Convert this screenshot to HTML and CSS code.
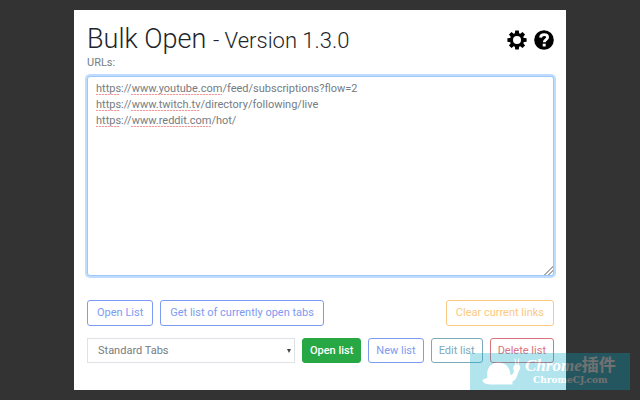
FILE: index.html
```html
<!DOCTYPE html>
<html lang="en">
<head>
  <meta charset="UTF-8" />
  <meta name="viewport" content="width=device-width, initial-scale=1.0"/>
  <title>Bulk Open</title>
  <link rel="stylesheet" href="styles.css">
</head>
<body>
  <main class="popup">
    <header class="header">
      <h1>Bulk Open <small>- Version 1.3.0</small></h1>
      <div class="header-icons">
        <button class="icon-btn" type="button" aria-label="Settings">
          <svg viewBox="0 0 20 20" width="20" height="20">
            <g fill="#000">
              <circle cx="10" cy="10" r="7"/>
              <g id="teeth">
                <path d="M8.2 0.4h3.6l.5 4h-4.600zM8.2 19.6h3.6l.5-4h-4.600z"/>
                <path d="M0.4 8.2v3.6l4 .5v-4.600zM19.6 8.2v3.6l-4 .5v-4.600z"/>
              </g>
              <use href="#teeth" transform="rotate(45 10 10)"/>
            </g>
            <circle cx="10" cy="10" r="4" fill="#fff"/>
          </svg>
        </button>
        <button class="icon-btn" type="button" aria-label="Help">
          <svg viewBox="0 0 20 20" width="20" height="20">
            <circle cx="10" cy="10" r="9.8" fill="#000"/>
            <path d="M6.5 7.600C6.800 5.500 8.200 4.600 10.100 4.600c2 0 3.500 1 3.500 2.700 0 2.400-3.300 2.300-3.300 4.900" fill="none" stroke="#fff" stroke-width="2.8"/>
            <path d="M8.700 13.700h3v2.800h-3z" fill="#fff"/>
          </svg>
        </button>
      </div>
    </header>

    <label class="urls-label" for="urls">URLs:</label>
    <textarea id="urls" class="urls" spellcheck="true">https://www.youtube.com/feed/subscriptions?flow=2
https://www.twitch.tv/directory/following/live
https://www.reddit.com/hot/</textarea>

    <div class="row actions">
      <button class="btn btn-blue" type="button">Open List</button>
      <button class="btn btn-blue" type="button">Get list of currently open tabs</button>
      <button class="btn btn-yellow push-right" type="button">Clear current links</button>
    </div>

    <div class="row lists">
      <div class="select-wrap">
        <select class="list-select" aria-label="Saved list">
          <option>Standard Tabs</option>
        </select>
      </div>
      <button class="btn btn-green" type="button">Open list</button>
      <button class="btn btn-blue" type="button">New list</button>
      <button class="btn btn-teal" type="button">Edit list</button>
      <button class="btn btn-red" type="button">Delete list</button>
    </div>
  </main>

  <div class="watermark">
    <svg class="snail" viewBox="0 0 40 28" width="40" height="28">
      <path fill="#fff" d="M0.5 22.5C1.5 20.5 4 20.5 5.5 20 3.500 11 9 4.500 16.500 4.500c7.500 0 11.500 5.500 12 12.500 2.500-.5 3.500-2 3.300-4.500-1.500-3 .2-6.500 3.200-6.300 3 .2 4.200 3.200 2.500 5.800-1.500 2-1.800 5-3 7.500-.8 1.800-2 3-4 4v3H10.500C5 26.500 1 25.500.5 22.500z"/>
      <path fill="none" stroke="#fff" stroke-width="1" d="M34 7l-1-6.500M36 7l.8-6.500"/>
    </svg>
    <div class="watermark-text">
      <span class="watermark-name"><i>Chrome</i>插件</span>
      <span class="watermark-site">ChromeCJ.com</span>
    </div>
  </div>
</body>
</html>
```
FILE: styles.css
```css
:root {
  --page-color: #333333;
  --text-color: #757c83;
  --blue: #7d9bf0;
  --yellow: #fbc97f;
  --green: #28a745;
  --teal: #7caabb;
  --red: #d9727c;
  --squiggle: repeating-linear-gradient(90deg, #f59a9a 0 2px, #fce0e0 2px 3px);
}

* {
  box-sizing: border-box;
}

body {
  margin: 0;
  padding: 10px 0;
  background-color: var(--page-color);
  color: var(--text-color);
  font-family: Roboto, "Liberation Sans", sans-serif;
  font-size: 11px;
  line-height: 16px;
}

.popup {
  max-width: 492px;
  margin: 0 auto;
  padding: 13px 12px 27px 13px;
  background-color: #fff;
}

.header {
  display: flex;
  align-items: center;
  justify-content: space-between;
}

h1 {
  margin: 0;
  color: #212529;
  font-size: 27px;
  font-weight: 300;
  line-height: 32px;
}

h1 small {
  font-size: 22px;
}

.header-icons {
  display: flex;
  gap: 7px;
}

.icon-btn {
  padding: 0;
  border: none;
  background: none;
  cursor: pointer;
}

.icon-btn svg {
  display: block;
}

.urls-label {
  display: block;
  line-height: 12px;
}

.urls {
  display: block;
  width: 100%;
  height: 200px;
  margin-top: 7px;
  padding: 4px 8px;
  border: 1px solid #9cc8fa;
  border-radius: 3px;
  outline: none;
  box-shadow: 0 0 0 2px #bfdcff;
  color: var(--text-color);
  font-family: inherit;
  font-size: 11px;
  line-height: 16px;
  resize: vertical;
  /* spelling marks under the host names */
  background-color: #fff;
  background-image: var(--squiggle), var(--squiggle), var(--squiggle), var(--squiggle), var(--squiggle), var(--squiggle);
  background-repeat: no-repeat;
  background-size: 24px 1px, 91px 1px, 24px 1px, 69px 1px, 24px 1px, 80px 1px;
  background-position: 8px 17px, 43px 17px, 8px 33px, 43px 33px, 8px 49px, 43px 49px;
}

.urls::-webkit-resizer {
  background: linear-gradient(135deg, transparent 70%, #aaa 70% 74%, transparent 74% 83%, #aaa 83% 87%, transparent 87%);
}

.row {
  display: flex;
  gap: 7px;
}

.actions {
  margin-top: 24px;
}

.lists {
  margin-top: 12px;
}

.push-right {
  margin-left: auto;
}

.btn {
  height: 26px;
  padding: 0 9px;
  border: 1px solid;
  border-radius: 3px;
  background-color: #fff;
  font-family: inherit;
  font-size: 11px;
  line-height: 16px;
  white-space: nowrap;
  cursor: pointer;
}

.lists .btn {
  height: 25px;
  padding: 0 7px;
}

.btn-blue {
  color: var(--blue);
}

.btn-yellow {
  color: var(--yellow);
}

.btn-teal {
  color: var(--teal);
}

.btn-red {
  color: var(--red);
}

.lists .btn-green {
  border-color: var(--green);
  background-color: var(--green);
  color: #fff;
  font-weight: 500;
}

.select-wrap {
  position: relative;
  flex: 1;
}

.select-wrap::after {
  content: "";
  position: absolute;
  top: 11px;
  right: 4px;
  border: 2px solid transparent;
  border-top: 4px solid #444;
  pointer-events: none;
}

.list-select {
  display: block;
  width: 100%;
  height: 25px;
  padding: 0 10px;
  border: 1px solid #dfe3e7;
  border-radius: 0;
  appearance: none;
  background-color: #fff;
  color: var(--text-color);
  font-family: inherit;
  font-size: 11px;
}

.watermark {
  position: absolute;
  right: 10px;
  bottom: 10px;
  display: flex;
  align-items: center;
  gap: 3px;
  width: 160px;
  height: 37px;
  padding-left: 12px;
  background-color: #04a8c8;
  color: #fff;
  opacity: 0.3;
}

.snail {
  flex: none;
}

.watermark-text {
  display: flex;
  flex-direction: column;
  align-items: center;
  font-family: "Liberation Serif", "Noto Sans CJK SC", serif;
  font-weight: bold;
  white-space: nowrap;
}

.watermark-name {
  font-size: 17px;
  line-height: 18px;
}

.watermark-site {
  font-family: "DejaVu Serif", serif;
  font-size: 9px;
  line-height: 11px;
}
```
